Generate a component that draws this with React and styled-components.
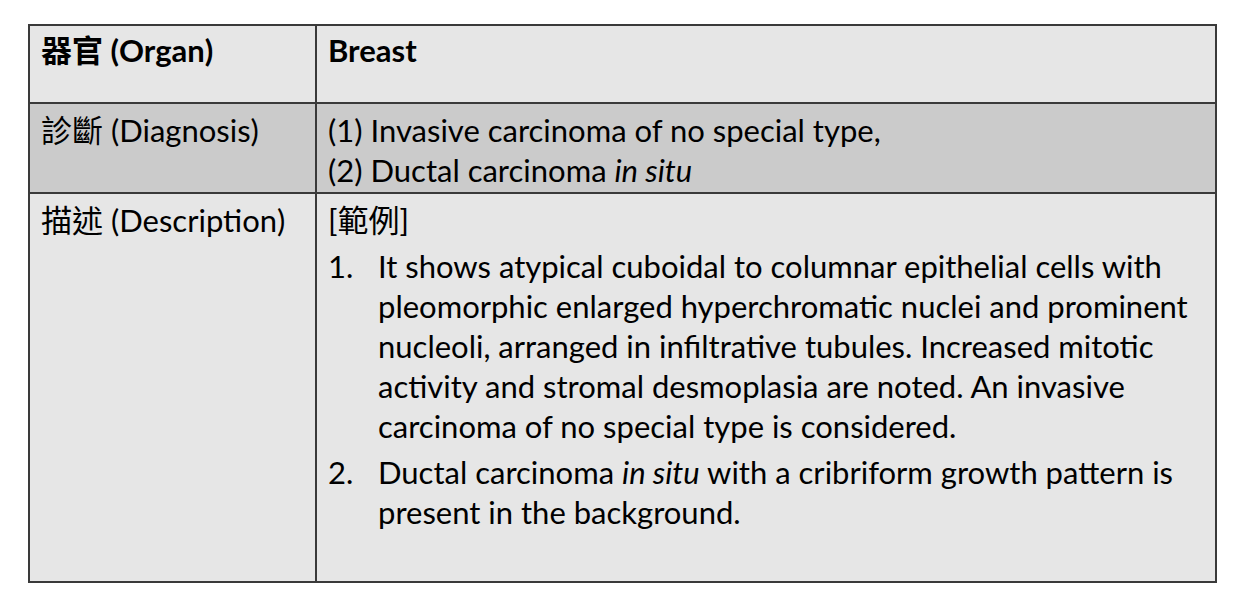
import styled, { createGlobalStyle } from 'styled-components'

const GlobalStyle = createGlobalStyle`
  html, body {
    margin: 0;
    background: #ffffff;
  }
  body {
    font-family: Lato, "Noto Sans CJK TC", sans-serif;
    color: #000;
  }
`

const firstItem = [
  'It shows atypical cuboidal to columnar epithelial cells with',
  'pleomorphic enlarged hyperchromatic nuclei and prominent',
  'nucleoli, arranged in infiltrative tubules. Increased mitotic',
  'activity and stromal desmoplasia are noted. An invasive',
  'carcinoma of no special type is considered.',
]

function App() {
  return (
    <Page>
      <GlobalStyle />
      <Table>
        <Row $bg="#e6e6e6" $h={76}>
          <Label $bold $top={4}>器官 (Organ)</Label>
          <Value $bold $top={4}>Breast</Value>
        </Row>
        <Row $bg="#cbcbcb" $h={88}>
          <Label>診斷 (Diagnosis)</Label>
          <Value>
            <Line>(1) Invasive carcinoma of no special type,</Line>
            <Line>(2) Ductal carcinoma <em>in situ</em></Line>
          </Value>
        </Row>
        <Row $bg="#e6e6e6" $h={387}>
          <Label>描述 (Description)</Label>
          <Value>
            <Line>[範例]</Line>
            <List>
              <Item>
                <Num>1.</Num>
                <ItemText>
                  {firstItem.map(t => (
                    <Line key={t}>{t}</Line>
                  ))}
                </ItemText>
              </Item>
              <Item>
                <Num>2.</Num>
                <ItemText>
                  <Line>
                    Ductal carcinoma <em>in situ</em> with a cribriform growth pattern is
                  </Line>
                  <Line>present in the background.</Line>
                </ItemText>
              </Item>
            </List>
          </Value>
        </Row>
      </Table>
    </Page>
  )
}

export default App

const Page = styled.div`
  padding: 24px 0 0 28px;
`

const Table = styled.div`
  width: 1189px;
  border: 2px solid #3a3a3a;
  box-sizing: border-box;
`

const Row = styled.div`
  display: grid;
  grid-template-columns: 287px 1fr;
  min-height: ${p => p.$h}px;
  background: ${p => p.$bg};
  & + & {
    border-top: 2px solid #3a3a3a;
  }
`

const Cell = styled.div`
  padding: ${p => p.$top ?? 6}px 11px 0 11px;
  font-size: 31px;
  line-height: 40px;
  font-weight: ${p => (p.$bold ? 700 : 400)};
`

const Label = styled(Cell)`
  border-right: 2px solid #3a3a3a;
`

const Value = styled(Cell)``

const Line = styled.div`
  white-space: nowrap;
`

const List = styled.div`
  display: flex;
  flex-direction: column;
  gap: 6px;
  margin-top: 6px;
`

const Item = styled.div`
  display: flex;
`

const Num = styled.span`
  width: 50px;
  flex: none;
`

const ItemText = styled.div``
